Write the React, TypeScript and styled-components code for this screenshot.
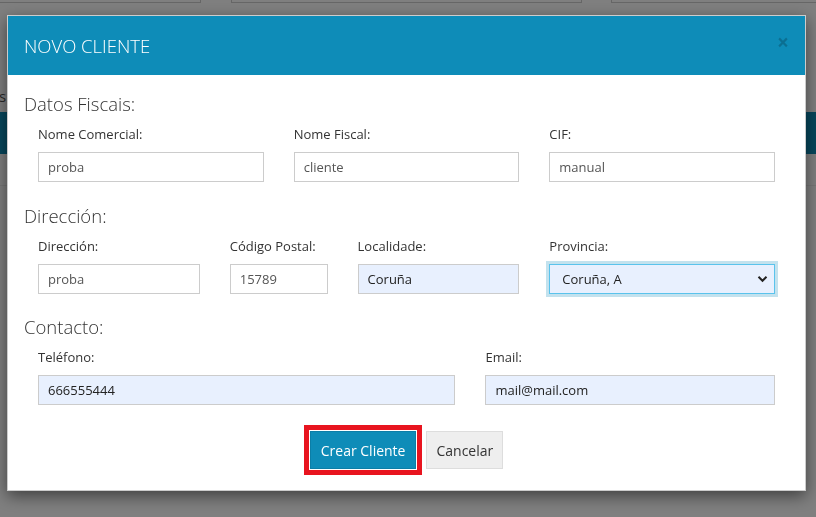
import React from "react";
import styled, { createGlobalStyle } from "styled-components";

const Global = createGlobalStyle`
  html, body { margin: 0; padding: 0; background: #fff; }
  body { font-family: "Open Sans", "Liberation Sans", sans-serif; width: 816px; height: 517px; overflow: hidden; }
  * { box-sizing: border-box; }
`;

/* ---------- page behind the modal ---------- */
const Page = styled.div`
  width: 816px;
  height: 517px;
  display: flex;
  flex-direction: column;
`;

const TopFilters = styled.div`
  display: flex;
  height: 3px;
  margin-left: -10px;
`;

const FilterBox = styled.div<{ $w: number; $gap: number }>`
  width: ${(p) => p.$w}px;
  margin-left: ${(p) => p.$gap}px;
  height: 30px;
  margin-top: -27px;
  border: 1px solid #ccc;
  flex: none;
`;

const PageTitle = styled.div`
  margin-top: 83px;
  margin-left: -1px;
  font-size: 15px;
  line-height: 20px;
  color: #555;
  white-space: nowrap;
`;

const PageBar = styled.div`
  margin-top: 6px;
  height: 42px;
  background: #0e8db8;
`;

const PageRule = styled.div`
  margin-top: 31px;
  height: 1px;
  background: #eee;
`;

/* ---------- modal ---------- */
const Overlay = styled.div`
  position: fixed;
  inset: 0;
  background: rgba(0, 0, 0, 0.5);
  padding: 15px 0 0 7px;
`;

const Dialog = styled.div`
  width: 799px;
  background: #fff;
  border: 1px solid rgba(0, 0, 0, 0.2);
  box-shadow: 0 5px 15px rgba(0, 0, 0, 0.5);
`;

const Header = styled.div`
  height: 59px;
  background: #0e8cb8;
  display: flex;
  align-items: center;
  justify-content: space-between;
  padding: 0 16px;
`;

const Title = styled.h4`
  margin: 0;
  font-size: 18.5px;
  font-weight: 300;
  line-height: 20px;
  color: #fff;
`;

const Close = styled.span`
  font-size: 21px;
  font-weight: 700;
  line-height: 1;
  color: #000;
  opacity: 0.2;
  margin-top: -7px;
`;

const Body = styled.div`
  padding: 19px 16px 21px;
`;

const Section = styled.section`
  & + & { margin-top: 23.5px; }
`;

const SectionTitle = styled.h4`
  margin: 0 0 11px;
  font-size: 18.5px;
  font-weight: 300;
  line-height: 20px;
  color: #333;
`;

const Row = styled.div`
  display: grid;
  grid-template-columns: repeat(12, 1fr);
  margin: 0 -1px;
`;

const Field = styled.div<{ $span: number }>`
  grid-column: span ${(p) => p.$span};
  padding: 0 15px;
`;

const Label = styled.label`
  display: block;
  font-size: 13px;
  line-height: 18px;
  color: #333;
  margin-bottom: 9px;
`;

const Input = styled.input<{ $auto?: boolean }>`
  display: block;
  width: 100%;
  height: 30px;
  border: 1px solid #ccc;
  border-radius: 0;
  padding: 0 9px;
  font-family: "Open Sans", sans-serif;
  font-size: 13px;
  color: ${(p) => (p.$auto ? "#222" : "#555")};
  background: ${(p) => (p.$auto ? "#e8f0fe" : "#fff")};
  outline: none;
`;

const SelectWrap = styled.div`
  position: relative;
  height: 30px;
`;

const Select = styled.select`
  appearance: none;
  -webkit-appearance: none;
  display: block;
  width: 100%;
  height: 30px;
  border: 1px solid #5ac3ec;
  border-radius: 0;
  box-shadow: 0 0 0 3px #c3e2ee;
  padding: 0 12px;
  font-family: "Open Sans", sans-serif;
  font-size: 13px;
  color: #222;
  background: #e8f0fe;
  outline: none;
`;

const Chevron = styled.svg`
  position: absolute;
  right: 7px;
  top: 11px;
  pointer-events: none;
`;

const Actions = styled.div`
  display: flex;
  justify-content: center;
  gap: 10px;
  margin-top: 26px;
`;

const Button = styled.button<{ $primary?: boolean }>`
  height: 38px;
  padding: 0 ${(p) => (p.$primary ? 10 : 9)}px;
  font-family: "Open Sans", sans-serif;
  font-size: 14px;
  border-radius: 0;
  cursor: pointer;
  border: 1px solid ${(p) => (p.$primary ? "#0b7ea7" : "#ddd")};
  background: ${(p) => (p.$primary ? "#0e8cb8" : "#eee")};
  color: ${(p) => (p.$primary ? "#fff" : "#333")};
  ${(p) => (p.$primary ? "outline: 5px solid #e8141f; outline-offset: 1px;" : "")}
`;

export default function App() {
  return (
    <>
      <Global />
      <Page>
        <TopFilters>
          <FilterBox $w={211} $gap={0} />
          <FilterBox $w={351} $gap={30} />
          <FilterBox $w={260} $gap={29} />
        </TopFilters>
        <PageTitle>s</PageTitle>
        <PageBar />
        <PageRule />
      </Page>
      <Overlay>
        <Dialog>
          <Header>
            <Title>NOVO CLIENTE</Title>
            <Close>×</Close>
          </Header>
          <Body>
            <Section>
              <SectionTitle>Datos Fiscais:</SectionTitle>
              <Row>
                <Field $span={4}>
                  <Label>Nome Comercial:</Label>
                  <Input defaultValue="proba" />
                </Field>
                <Field $span={4}>
                  <Label>Nome Fiscal:</Label>
                  <Input defaultValue="cliente" />
                </Field>
                <Field $span={4}>
                  <Label>CIF:</Label>
                  <Input defaultValue="manual" />
                </Field>
              </Row>
            </Section>
            <Section>
              <SectionTitle>Dirección:</SectionTitle>
              <Row>
                <Field $span={3}>
                  <Label>Dirección:</Label>
                  <Input defaultValue="proba" />
                </Field>
                <Field $span={2}>
                  <Label>Código Postal:</Label>
                  <Input defaultValue="15789" />
                </Field>
                <Field $span={3}>
                  <Label>Localidade:</Label>
                  <Input $auto defaultValue="Coruña" />
                </Field>
                <Field $span={4}>
                  <Label>Provincia:</Label>
                  <SelectWrap>
                    <Select defaultValue="15">
                      <option value="15">Coruña, A</option>
                      <option value="27">Lugo</option>
                      <option value="32">Ourense</option>
                      <option value="36">Pontevedra</option>
                    </Select>
                    <Chevron width="11" height="8" viewBox="0 0 11 8">
                      <path d="M1.5 1.8 L5.5 5.8 L9.5 1.8" fill="none" stroke="#222" strokeWidth="2" />
                    </Chevron>
                  </SelectWrap>
                </Field>
              </Row>
            </Section>
            <Section>
              <SectionTitle>Contacto:</SectionTitle>
              <Row>
                <Field $span={7}>
                  <Label>Teléfono:</Label>
                  <Input $auto defaultValue="666555444" />
                </Field>
                <Field $span={5}>
                  <Label>Email:</Label>
                  <Input $auto defaultValue="mail@mail.com" />
                </Field>
              </Row>
            </Section>
            <Actions>
              <Button $primary>Crear Cliente</Button>
              <Button>Cancelar</Button>
            </Actions>
          </Body>
        </Dialog>
      </Overlay>
    </>
  );
}
